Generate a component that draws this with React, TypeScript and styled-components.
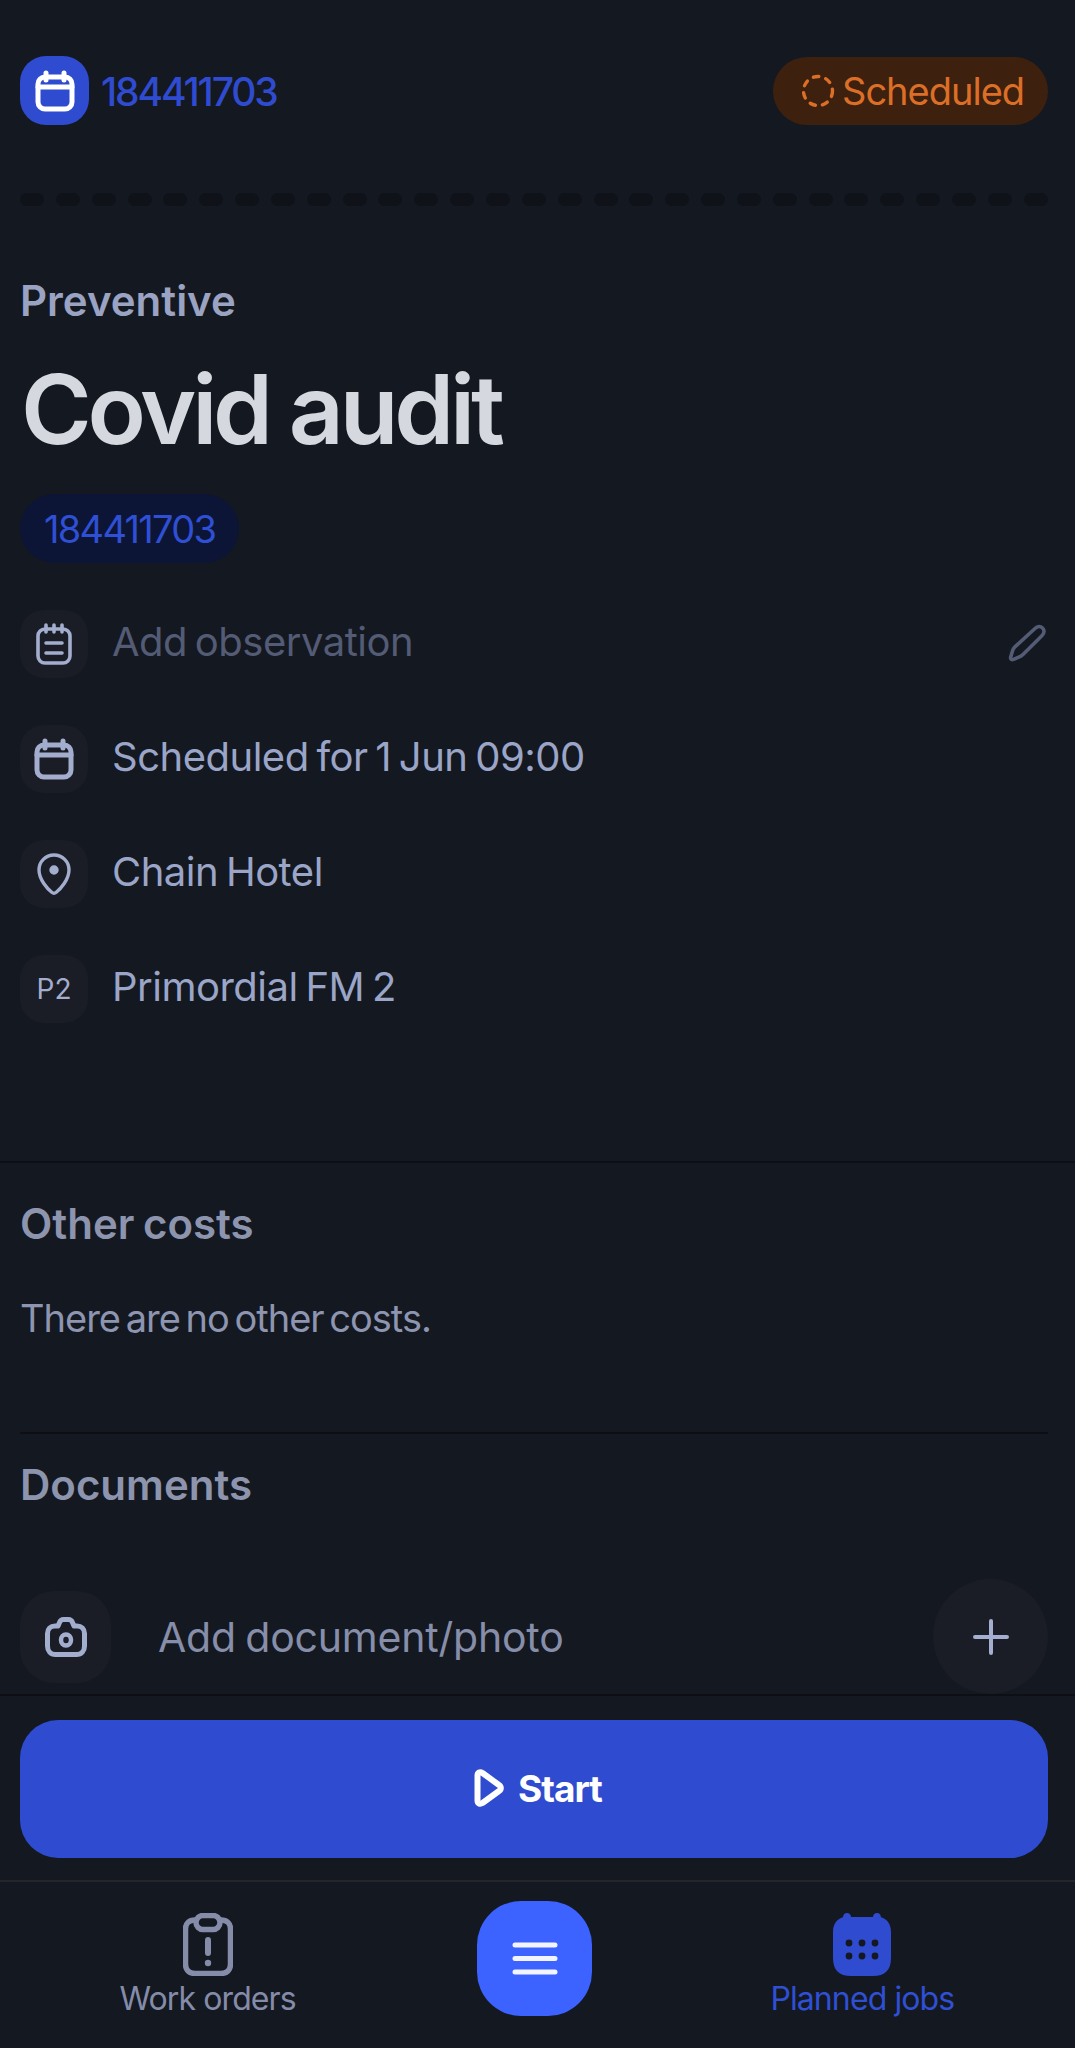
import styled, { createGlobalStyle } from 'styled-components'

const GlobalStyle = createGlobalStyle`
    html, body {
        margin: 0;
        padding: 0;
        background: #141820;
    }
    * {
        box-sizing: border-box;
    }
`

const Page = styled.div`
    width: 1075px;
    height: 2048px;
    overflow: hidden;
    display: flex;
    flex-direction: column;
    background: #141820;
    font-family: Inter, "Liberation Sans", sans-serif;
`

const Content = styled.main`
    flex: 1;
    padding: 56px 27px 0 20px;
`

const TopBar = styled.header`
    display: flex;
    justify-content: space-between;
    align-items: center;
`

const JobId = styled.div`
    display: flex;
    align-items: center;
    gap: 12px;
    color: #2f4bcf;
    font-size: 39px;
    font-weight: 500;
    letter-spacing: -2.1px;
`

const JobNumber = styled.span`
    padding-top: 2px;
`

const JobIcon = styled.div`
    width: 69px;
    height: 69px;
    border-radius: 26px;
    background: #2f4bcf;
    display: flex;
    align-items: center;
    justify-content: center;
`

const StatusBadge = styled.div`
    width: 275px;
    height: 68px;
    border-radius: 34px;
    background: #3e200e;
    color: #dc6f27;
    display: flex;
    align-items: center;
    gap: 7px;
    padding-left: 28px;
    font-size: 38px;
    letter-spacing: -1px;
`

const DashRow = styled.div`
    display: flex;
    justify-content: space-between;
    margin-top: 68px;
`

const Dash = styled.span`
    width: 24px;
    height: 13px;
    border-radius: 6.5px;
    background: #0f1219;
`

const Category = styled.div`
    margin-top: 71px;
    color: #9aa3c2;
    font-size: 42px;
    font-weight: 600;
    line-height: 48px;
`

const Title = styled.h1`
    margin: 34px 0 0 1px;
    color: #d5d8de;
    font-size: 96px;
    font-weight: 600;
    line-height: 100px;
    letter-spacing: -4.2px;
`

const Chip = styled.div`
    display: inline-flex;
    align-items: center;
    margin-top: 35px;
    height: 69px;
    padding: 0 24px;
    border-radius: 35px;
    background: #0c1535;
    color: #2f4fd4;
    font-size: 38px;
    letter-spacing: -1.7px;
`

const InfoList = styled.div`
    display: flex;
    flex-direction: column;
    gap: 47px;
    margin-top: 47px;
`

const InfoRow = styled.div`
    display: flex;
    align-items: center;
    gap: 24px;
`

const IconBox = styled.div`
    width: 68px;
    height: 68px;
    flex: none;
    border-radius: 24px;
    background: #1a1d25;
    display: flex;
    align-items: center;
    justify-content: center;
    color: #a3aece;
    font-size: 28px;
`

const InfoText = styled.div<{ $muted?: boolean }>`
    flex: 1;
    padding-bottom: 5px;
    color: ${p => (p.$muted ? '#535b75' : '#9aa5c8')};
    font-size: 40px;
    letter-spacing: -0.5px;
    word-spacing: -3px;
`

const Divider = styled.div`
    height: 2px;
    background: #0d0f14;
    margin-top: 138px;
`

const Section = styled.section`
    padding: 37px 27px 0 20px;
`

const SectionTitle = styled.h2`
    margin: 0;
    color: #8d94ae;
    font-size: 42px;
    font-weight: 600;
    line-height: 48px;
    word-spacing: -2px;
`

const SectionNote = styled.p`
    margin: 47px 0 0;
    color: #8d95b0;
    font-size: 38px;
    line-height: 46px;
    letter-spacing: -1px;
    word-spacing: -4px;
`

const InnerDivider = styled.div`
    height: 2px;
    background: #0d0f14;
    margin-top: 91px;
`

const DocumentsTitle = styled(SectionTitle)`
    margin-top: 27px;
`

const DocumentRow = styled.div`
    display: flex;
    align-items: center;
    margin-top: 70px;
`

const CameraBox = styled(IconBox)`
    width: 91px;
    height: 92px;
    border-radius: 34px;
`

const DocumentLabel = styled.div`
    flex: 1;
    margin-left: 47px;
    color: #868ea9;
    font-size: 41px;
    letter-spacing: -0.2px;
    word-spacing: -2px;
`

const AddButton = styled.button`
    width: 115px;
    height: 115px;
    border: 0;
    padding: 0;
    border-radius: 50%;
    background: #1a1d25;
    display: flex;
    align-items: center;
    justify-content: center;
`

const ActionBar = styled.div`
    border-top: 2px solid #0d0f14;
    padding: 24px 27px 22px 20px;
`

const StartButton = styled.button`
    width: 100%;
    height: 138px;
    border: 0;
    padding: 0 0 2px 8px;
    border-radius: 38px;
    background: #2f4bcf;
    color: #fff;
    display: flex;
    align-items: center;
    justify-content: center;
    gap: 14px;
    font-family: inherit;
    font-size: 37px;
    font-weight: 700;
    letter-spacing: -1px;
`

const BottomNav = styled.nav`
    height: 168px;
    border-top: 2px solid #24262c;
    display: grid;
    grid-template-columns: repeat(3, 1fr);
    padding: 0 49px 0 44px;
`

const NavItem = styled.div<{ $active?: boolean }>`
    display: flex;
    flex-direction: column;
    align-items: center;
    padding-top: 31px;
    color: ${p => (p.$active ? '#2f4fd4' : '#848ca9')};
    font-size: 32px;
    line-height: 40px;
    letter-spacing: -0.9px;

    svg {
        display: block;
        margin-bottom: 3px;
    }
`

const MenuButton = styled.button`
    justify-self: center;
    width: 115px;
    height: 115px;
    margin-top: 19px;
    border: 0;
    padding: 0;
    border-radius: 44px;
    background: #3c62ff;
    display: flex;
    align-items: center;
    justify-content: center;
`

const CalendarOutline = ({ color = '#fff' }: { color?: string }) => (
    <svg width="40" height="42" viewBox="0 0 40 42" fill="none" stroke={color} strokeWidth="5" strokeLinecap="round" strokeLinejoin="round">
        <rect x="3" y="7" width="34" height="32" rx="7" />
        <path d="M3 17h34M11 3v7M29 3v7" />
    </svg>
)

const ObservationIcon = () => (
    <svg width="36" height="42" viewBox="0 0 36 42" fill="none" stroke="#a3aece" strokeWidth="3.6" strokeLinecap="round" strokeLinejoin="round">
        <rect x="2" y="6" width="32" height="34" rx="7" />
        <path d="M10 2v7M18 2v7M26 2v7M10 20h16M10 30h16" />
    </svg>
)

const PinIcon = () => (
    <svg width="34" height="42" viewBox="0 0 34 42" fill="none" stroke="#a3aece" strokeWidth="3.4" strokeLinecap="round" strokeLinejoin="round">
        <path d="M17 2C8.500 2 2 8.600 2 17c0 9.500 8.500 19 13 22.500 1.200.9 2.800.9 4 0C23.500 36 32 26.500 32 17 32 8.600 25.500 2 17 2Z" />
        <circle cx="17" cy="17" r="3" fill="#a3aece" />
    </svg>
)

const PencilIcon = () => (
    <svg width="40" height="40" viewBox="0 0 40 40" fill="none" stroke="#535b75" strokeWidth="3.600" strokeLinecap="round" strokeLinejoin="round">
        <path d="M27 4.500c2.600-2.700 5.500-2.500 7.500-.5s2.200 5-.4 7.500L15 30.500c-1.400 1.400-2.500 2-4.200 2.700L5.500 35.300c-2 .8-3.300-.4-2.800-2.300L4.500 27c.5-1.800 1.300-3 2.700-4.400L27 4.500Z" />
    </svg>
)

const CameraIcon = () => (
    <svg width="42" height="40" viewBox="0 0 42 40" fill="none" stroke="#a3aece" strokeWidth="5" strokeLinecap="round" strokeLinejoin="round">
        <path d="M13 9l1.500-3.500C15.300 3.500 16.500 2.500 18.500 2.500h5c2 0 3.200 1 4 3L29 9h3c4.500 0 7.500 3 7.500 7.500V29c0 5-3 8.500-8 8.500h-21c-5 0-8-3.500-8-8.500V16.500C2.500 12 5.500 9 10 9h3Z" />
        <ellipse cx="21" cy="23" rx="5" ry="5.500" strokeWidth="4.500" />
    </svg>
)

const PlusIcon = () => (
    <svg width="36" height="36" viewBox="0 0 36 36" fill="none" stroke="#a4aecf" strokeWidth="4" strokeLinecap="round">
        <path d="M18 2v32M2 18h32" />
    </svg>
)

const PlayIcon = () => (
    <svg width="30" height="38" viewBox="0 0 30 38" fill="none" stroke="#fff" strokeWidth="6" strokeLinecap="round" strokeLinejoin="round">
        <path d="M3.500 6.500c0-3 2.500-4 5-2.500l16.500 12c2.400 1.500 2.400 4.500 0 6L8.500 34c-2.500 1.500-5 .5-5-2.500v-25Z" />
    </svg>
)

const ClipboardIcon = () => (
    <svg width="50" height="63" viewBox="0 0 50 63" fill="none" stroke="#848ca9" strokeWidth="5.500" strokeLinecap="round" strokeLinejoin="round">
        <path d="M13 7h-1C6 7 2.500 10.500 2.500 16v35c0 6 3.500 9.500 9.500 9.500h26c6 0 9.500-3.500 9.500-9.500V16c0-5.500-3.500-9-9.500-9h-1" />
        <rect x="13" y="2.500" width="24" height="14" rx="7" />
        <path d="M25 27v13" strokeWidth="6" />
        <circle cx="25" cy="50" r="3.200" fill="#848ca9" stroke="none" />
    </svg>
)

const CalendarFilled = () => (
    <svg width="58" height="63" viewBox="0 0 58 63" fill="#2f4bcf">
        <path d="M14 0c2.500 0 4 2 4 4h22c0-2 1.500-4 4-4s4 2 4 4.300C54 6 58 11 58 19v26c0 12-6 18-18 18H18C6 63 0 57 0 45V19C0 11 4 6 10 4.300 10 2 11.500 0 14 0Z" />
        <g fill="#141820">
            <circle cx="16" cy="30" r="3.400" />
            <circle cx="29" cy="30" r="3.400" />
            <circle cx="42" cy="30" r="3.400" />
            <circle cx="16" cy="43" r="3.400" />
            <circle cx="29" cy="43" r="3.400" />
            <circle cx="42" cy="43" r="3.400" />
        </g>
    </svg>
)

const DashedCircle = () => (
    <svg width="34" height="34" viewBox="0 0 34 34" fill="none" stroke="#dc6f27" strokeWidth="3.400" strokeLinecap="round" strokeDasharray="5.500 7.150">
        <circle cx="17" cy="17" r="14.500" />
    </svg>
)

const MenuIcon = () => (
    <svg width="46" height="33" viewBox="0 0 46 33" fill="none" stroke="#f2f4ff" strokeWidth="5" strokeLinecap="round">
        <path d="M3 3h40M3 16.500h40M3 30h40" />
    </svg>
)

export default function App() {
    return (
        <Page>
            <GlobalStyle />
            <Content>
                <TopBar>
                    <JobId>
                        <JobIcon>
                            <CalendarOutline />
                        </JobIcon>
                        <JobNumber>184411703</JobNumber>
                    </JobId>
                    <StatusBadge>
                        <DashedCircle />
                        Scheduled
                    </StatusBadge>
                </TopBar>
                <DashRow>
                    {Array.from({ length: 29 }, (_, i) => <Dash key={i} />)}
                </DashRow>
                <Category>Preventive</Category>
                <Title>Covid audit</Title>
                <Chip>184411703</Chip>
                <InfoList>
                    <InfoRow>
                        <IconBox><ObservationIcon /></IconBox>
                        <InfoText $muted>Add observation</InfoText>
                        <PencilIcon />
                    </InfoRow>
                    <InfoRow>
                        <IconBox><CalendarOutline color="#a3aece" /></IconBox>
                        <InfoText>Scheduled for 1 Jun 09:00</InfoText>
                    </InfoRow>
                    <InfoRow>
                        <IconBox><PinIcon /></IconBox>
                        <InfoText>Chain Hotel</InfoText>
                    </InfoRow>
                    <InfoRow>
                        <IconBox>P2</IconBox>
                        <InfoText>Primordial FM 2</InfoText>
                    </InfoRow>
                </InfoList>
            </Content>
            <Divider />
            <Section>
                <SectionTitle>Other costs</SectionTitle>
                <SectionNote>There are no other costs.</SectionNote>
                <InnerDivider />
                <DocumentsTitle>Documents</DocumentsTitle>
                <DocumentRow>
                    <CameraBox><CameraIcon /></CameraBox>
                    <DocumentLabel>Add document/photo</DocumentLabel>
                    <AddButton><PlusIcon /></AddButton>
                </DocumentRow>
            </Section>
            <ActionBar>
                <StartButton>
                    <PlayIcon />
                    Start
                </StartButton>
            </ActionBar>
            <BottomNav>
                <NavItem>
                    <ClipboardIcon />
                    Work orders
                </NavItem>
                <MenuButton><MenuIcon /></MenuButton>
                <NavItem $active>
                    <CalendarFilled />
                    Planned jobs
                </NavItem>
            </BottomNav>
        </Page>
    )
}
